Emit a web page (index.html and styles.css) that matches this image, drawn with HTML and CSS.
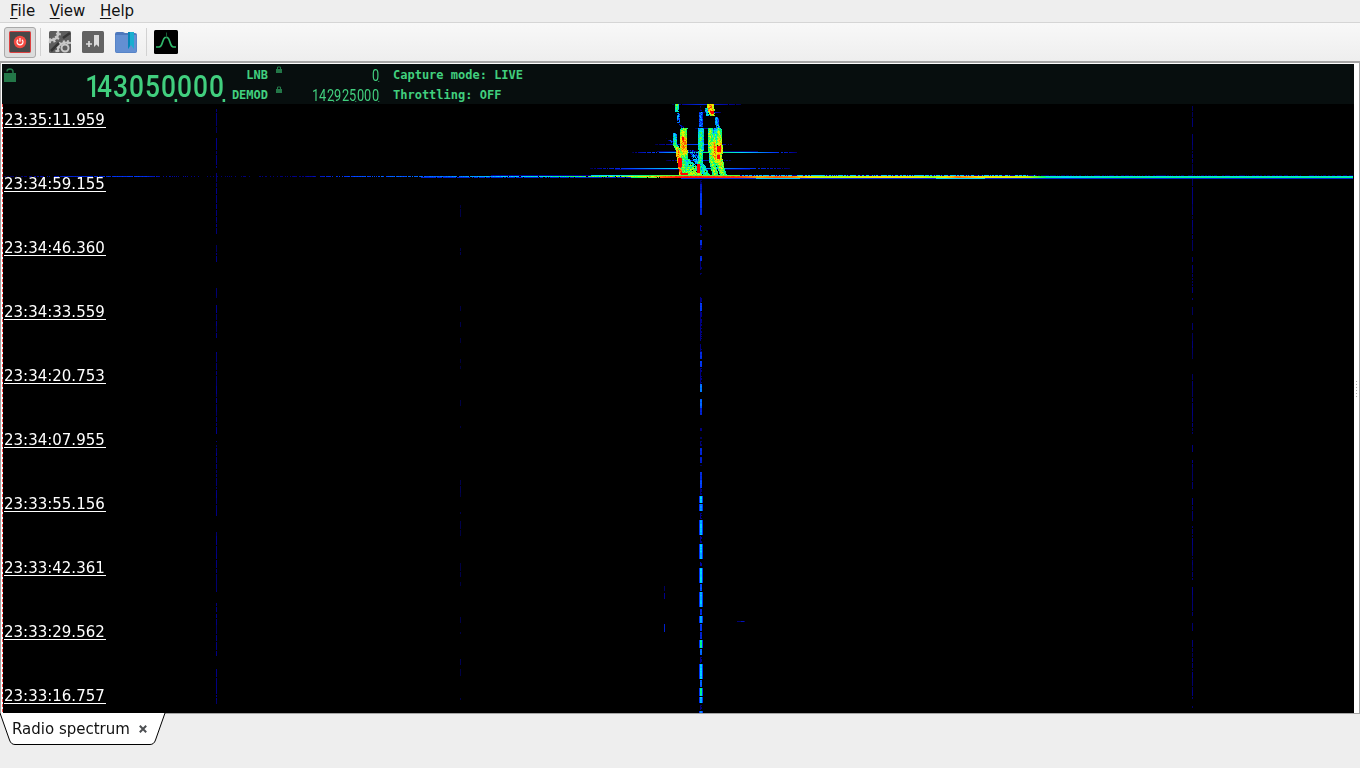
FILE: index.html
```html
<!DOCTYPE html>
<html lang="en">
<head>
  <meta charset="UTF-8">
  <title>Radio spectrum</title>
  <link rel="stylesheet" href="styles.css">
</head>
<body>
  <nav class="menubar">
    <span><u>F</u>ile</span>
    <span><u>V</u>iew</span>
    <span><u>H</u>elp</span>
  </nav>

  <div class="toolbar">
    <button class="tool active">
      <svg width="24" height="24" viewBox="0 0 24 24">
        <rect x="1.5" y="1.5" width="21" height="21" rx="1" fill="#484848" stroke="#dc4040"/>
        <circle cx="12" cy="12" r="6.2" fill="#f34b43"/>
        <path d="M10 9.7a3 3 0 1 0 4 0M12 8v3.7" fill="none" stroke="#fff" stroke-width="1.2"/>
      </svg>
    </button>
    <i class="divider"></i>
    <button class="tool">
      <svg width="24" height="24" viewBox="0 0 24 24">
        <rect x="1" y="1" width="22" height="22" rx="1.5" fill="#5d5d5d"/>
        <g fill="none" stroke="#c8c8c8">
          <path d="M1 10c6 1 10-3 9-9" stroke-width="2.500"/>
          <path d="M1 10.500c6 1 10-3 9.500-9.500" stroke-width="5" stroke-dasharray="1.8 2.200"/>
          <path d="M10 22c-1-7 4-11 13-9" stroke-width="2"/>
          <path d="M9.500 22c-1-7 4-11 13.500-9.500" stroke-width="4" stroke-dasharray="1.8 2.200"/>
          <circle cx="17" cy="18" r="3.500" stroke-width="2"/>
          <path d="M3 21L11 13M15 8L22 3" stroke="#353535" stroke-width="2.500"/>
        </g>
      </svg>
    </button>
    <button class="tool">
      <svg width="24" height="24" viewBox="0 0 24 24">
        <rect x="1" y="1" width="22" height="22" rx="1.5" fill="#636363"/>
        <path d="M13 5h5v12l-2.5-2.5L13 17z" fill="#ddd"/>
        <path d="M5 14h6M8 11v6" stroke="#ddd" stroke-width="1.7"/>
      </svg>
    </button>
    <button class="tool">
      <svg width="24" height="24" viewBox="0 0 24 24">
        <path d="M1 4q0-2 2-2h6l2 1h10q2 0 2 2v16q0 2-2 2H3q-2 0-2-2z" fill="#4d78bd"/>
        <path d="M1.5 5h21v16q0 1.5-2 1.5h-17q-2 0-2-1.5z" fill="#638fd2"/>
        <path d="M14 2h6v17l-3-4l-3 4z" fill="#19aed0"/>
        <path d="M14 2h2v14l-2 3z" fill="#0685b6"/>
      </svg>
    </button>
    <i class="divider"></i>
    <button class="tool">
      <svg width="24" height="24" viewBox="0 0 24 24">
        <rect width="24" height="24" rx="1.5" fill="#000"/>
        <path d="M2 17h3c4 0 3-8 6-9.500h2.500c3 1.500 2 9.500 6 9.500h2.500" fill="none" stroke="#30b96b" stroke-width="1.7"/>
        <path d="M12.500 2.500v5" stroke="#185b36"/>
      </svg>
    </button>
  </div>

  <main class="spectrum">
    <header class="lcd">
      <svg class="lock-main" width="12" height="14" viewBox="0 0 12 14">
        <path d="M0 5h12v9H0z" fill="#237748"/>
        <path d="M3 3.500Q3 1 6 1t3 3v2" fill="none" stroke="#237748" stroke-width="1.5"/>
      </svg>
      <div class="freq freq-big"><b class="one">1</b><b>4</b><b class="sep">3</b><b>0</b><b>5</b><b class="sep">0</b><b>0</b><b>0</b><b class="sep">0</b></div>
      <div class="names"><span>LNB</span><span>DEMOD</span></div>
      <div class="locks">
        <svg width="6" height="7" viewBox="0 0 6 7"><path d="M0 3h6v4H0z" fill="#237748"/><path d="M1.500 3V1h3v2" fill="none" stroke="#237748"/></svg>
        <svg width="6" height="7" viewBox="0 0 6 7"><path d="M0 3h6v4H0z" fill="#237748"/><path d="M1.500 3V1h3v2" fill="none" stroke="#237748"/></svg>
      </div>
      <div class="small-freqs">
        <div class="freq"><b class="sep">0</b></div>
        <div class="freq"><b>1</b><b>4</b><b class="sep">2</b><b>9</b><b>2</b><b class="sep">5</b><b>0</b><b>0</b><b class="sep">0</b></div>
      </div>
      <div class="status"><span>Capture mode: LIVE</span><span>Throttling: OFF</span></div>
    </header>

    <div class="waterfall">
      <canvas id="waterfall" width="1352" height="609"></canvas>
      <div class="times">
        <time>23:35:11.959</time>
        <time>23:34:59.155</time>
        <time>23:34:46.360</time>
        <time>23:34:33.559</time>
        <time>23:34:20.753</time>
        <time>23:34:07.955</time>
        <time>23:33:55.156</time>
        <time>23:33:42.361</time>
        <time>23:33:29.562</time>
        <time>23:33:16.757</time>
      </div>
    </div>
    <div class="grip"></div>
  </main>

  <footer class="tabs">
    <div class="tab">
      <svg class="tab-shape" width="166" height="32" viewBox="0 0 166 32">
        <path d="M0 0L9.500 27Q11 31.500 15 31.500H150Q154 31.500 155.500 27L165 0" fill="#fff" stroke="#000"/>
      </svg>
      <span>Radio spectrum</span>
      <svg class="close" width="8" height="8" viewBox="0 0 8 8"><path d="M.8.8l6.400 6.400M7.200.8L.8 7.200" stroke="#4d4f52" stroke-width="2"/></svg>
    </div>
  </footer>
  <script src="waterfall.js"></script>
</body>
</html>
```
FILE: styles.css
```css
* {
  box-sizing: border-box;
}
body {
  margin: 0;
  height: 768px;
  overflow: hidden;
  display: flex;
  flex-direction: column;
  background: #eee;
  color: #111;
  font-family: "DejaVu Sans", sans-serif;
  font-size: 15px;
}
.menubar {
  height: 23px;
  display: flex;
  gap: 14.600px;
  padding: 1px 0 0 10px;
  line-height: 20px;
  border-bottom: 1px solid #d5d5d5;
}
.menubar u {
  text-underline-offset: 2px;
}
.toolbar {
  height: 38px;
  display: flex;
  align-items: center;
  padding-left: 4px;
  background: linear-gradient(#f8f8f8, #eee);
}
.tool {
  width: 33px;
  height: 32px;
  padding: 0;
  display: flex;
  align-items: center;
  justify-content: center;
  border: 0;
  background: none;
}
.tool.active {
  width: 32px;
  height: 31px;
  border: 1px solid #a9a9a9;
  border-radius: 3px;
  background: #dcdcdc;
}
.divider {
  width: 1px;
  height: 28px;
  margin: 0 2px 0 4px;
  background: #d2d2d2;
}
.spectrum {
  height: 653px;
  display: grid;
  grid-template-columns: 1352px 1fr;
  grid-template-rows: 40px 609px;
  border: 1px solid #a5a5a5;
  border-top: 2px solid #a5a5a5;
  padding: 1px 0 0 1px;
  background: #fff;
}
.lcd {
  display: flex;
  background: #070e0e;
  color: #41cf7e;
}
.lock-main {
  margin: 4px 0 0 2px;
}
.freq {
  display: flex;
  font-family: Roboto, "Liberation Sans", sans-serif;
}
.freq b {
  width: 7.5px;
  font-size: 16px;
  font-weight: 400;
  line-height: 15px;
  transform: scaleX(.8);
  transform-origin: left;
}
.freq .sep {
  position: relative;
}
.freq .sep::after {
  content: "";
  position: absolute;
  right: -1px;
  bottom: 1px;
  width: 1px;
  height: 1px;
  background: #41cf7e;
}
.freq-big {
  width: 144px;
  margin: 8px 0 0 65px;
}
.freq-big b {
  width: 16px;
  font-size: 31px;
  font-weight: 500;
  line-height: 30px;
  transform: scaleX(.85);
}
.freq-big .one {
  text-indent: 5px;
}
.freq-big .sep::after {
  right: -3px;
  bottom: 2px;
  width: 3px;
  height: 3px;
}
.names,
.status {
  display: flex;
  flex-direction: column;
  padding-top: 1px;
  font: bold 12px/20px "DejaVu Sans Mono", monospace;
}
.names {
  width: 43px;
  text-align: right;
}
.locks {
  display: flex;
  flex-direction: column;
  gap: 13px;
  margin: 2px 0 0 8px;
}
.small-freqs {
  width: 97px;
  display: flex;
  flex-direction: column;
  align-items: flex-end;
  gap: 5px;
  padding-top: 4px;
}
.status {
  margin-left: 14px;
  white-space: pre;
}
.waterfall {
  grid-column: 1;
  display: grid;
  overflow: hidden;
}
.waterfall canvas,
.times {
  grid-area: 1 / 1;
}
.times {
  display: flex;
  flex-direction: column;
  align-items: flex-start;
  gap: 45px;
  padding: 5px 0 0 2px;
  color: #fff;
}
.times time {
  width: 102px;
  height: 19px;
  flex-shrink: 0;
  line-height: 22px;
  border-bottom: 1px solid #fff;
}
.grip {
  grid-area: 1 / 2 / 3 / 3;
  align-self: center;
  justify-self: start;
  width: 1px;
  height: 16px;
  margin-left: 2px;
  background: repeating-linear-gradient(#aaa 0 1px, transparent 1px 3px);
}
.tabs {
  flex: 1;
}
.tab {
  position: relative;
  z-index: 0;
  width: 166px;
  height: 32px;
  margin-top: -1px;
  display: flex;
  align-items: center;
  gap: 9px;
  padding-left: 12px;
}
.tab-shape {
  position: absolute;
  left: 0;
  top: 0;
  z-index: -1;
}
```
FILE: waterfall.js
```js
const canvas = document.getElementById("waterfall");
const ctx = canvas.getContext("2d");
ctx.translate(-2, -104);

let seed = 7;
function rnd() {
  seed = (seed * 16807) % 2147483647;
  return seed / 2147483647;
}

// signal level to colour
const scale = [
  [0, 0, 0, 0], [.15, 0, 0, 150], [.3, 0, 60, 255], [.48, 0, 220, 255],
  [.6, 0, 255, 100], [.72, 190, 255, 0], [.8, 255, 230, 0],
  [.9, 255, 110, 0], [1, 255, 0, 0]
];
function colour(v) {
  v = Math.max(0, Math.min(1, v));
  let i = 1;
  while (scale[i][0] < v) i++;
  const a = scale[i - 1], b = scale[i];
  const t = (v - a[0]) / (b[0] - a[0]);
  const c = n => Math.round(a[n] + (b[n] - a[n]) * t);
  return `rgb(${c(1)},${c(2)},${c(3)})`;
}
function cell(x, y, w, h, v) {
  ctx.fillStyle = colour(v);
  ctx.fillRect(Math.round(x), Math.round(y), w, h);
}
function level(stops, x) {
  for (let i = 1; i < stops.length; i++) {
    if (x <= stops[i][0]) {
      const a = stops[i - 1], b = stops[i];
      return a[1] + (b[1] - a[1]) * (x - a[0]) / (b[0] - a[0]);
    }
  }
  return stops[stops.length - 1][1];
}

ctx.fillStyle = "#000";
ctx.fillRect(2, 104, 1352, 609);

// weak constant carriers
function carrier(x, from, to, v, fill) {
  for (let y = from; y < to;) {
    const h = 2 + Math.floor(rnd() * 7);
    if (rnd() < fill) cell(x, y, 1, Math.min(h, to - y), v * (.75 + rnd() * .35));
    y += h + (rnd() < .6 ? 1 : 0);
  }
}
[[106, 168, .85], [173, 262, .85], [288, 338, .85], [352, 442, .9], [445, 528, .95],
 [532, 612, .85], [614, 656, .8], [669, 704, .95]].forEach(s => carrier(216, s[0], s[1], .13, s[2]));
[[106, 170, .8], [170, 262, .9], [265, 330, .85], [333, 434, .8], [445, 580, .95],
 [583, 638, .85], [640, 708, .85]].forEach(s => carrier(1192, s[0], s[1], .12, s[2]));
[[205, 225, .4], [248, 255, .8], [300, 380, .3], [400, 428, .3], [480, 497, .9],
 [512, 536, .7], [550, 704, .25]].forEach(s => carrier(460, s[0], s[1], .08, s[2]));

// centre carrier: from, to, level
[[180, 184, .1], [184, 193, .22], [193, 208, .3], [208, 215, .24], [225, 231, .16],
 [234, 236, .08], [240, 245, .28], [245, 250, .13], [256, 261, .26], [261, 270, .13],
 [273, 275, .1], [297, 303, .14], [303, 311, .3], [311, 341, .14], [344, 352, .13],
 [352, 359, .27], [361, 367, .3], [368, 384, .14], [384, 392, .38], [399, 408, .35],
 [408, 415, .24], [428, 431, .14], [437, 439, .1], [441, 446, .12], [448, 455, .25],
 [457, 463, .23], [465, 466, .1], [472, 480, .26], [480, 488, .32], [488, 495, .13],
 [496, 503, .48], [504, 511, .4], [513, 519, .14], [520, 535, .46], [536, 543, .15],
 [544, 552, .48], [552, 559, .46], [562, 566, .17], [568, 583, .5], [584, 591, .34],
 [592, 600, .45], [600, 607, .47], [609, 615, .26], [616, 623, .43], [624, 631, .3],
 [632, 639, .25], [640, 648, .58], [649, 655, .37], [657, 663, .15], [664, 679, .48],
 [680, 687, .35], [688, 696, .58], [697, 703, .46], [705, 710, .12], [711, 713, .4]
].forEach(([a, b, v]) => {
  for (let y = a; y < b; y++) {
    if (v > .2) cell(v > .38 ? 699 : 700, y, v > .38 ? 4 : 2, 1, v > .38 ? .28 : .2);
    cell(700, y, v > .2 || rnd() < .5 ? 2 : 1, 1, v * (.9 + rnd() * .12));
  }
});

cell(664, 586, 1, 5, .1);
cell(664, 593, 1, 6, .14);
cell(664, 624, 1, 8, .23);
cell(737, 621, 8, 1, .12);
cell(741, 621, 3, 1, .2);

// horizontal echoes: y, from, peak, to, level
[[104, 672, 700, 742, .25], [144, 655, 700, 732, .32], [152, 632, 712, 798, .62],
 [160, 666, 690, 732, .25], [168, 590, 680, 790, .5], [112, 702, 715, 721, .2],
 [128, 695, 708, 720, .2], [175, 655, 686, 725, .45]].forEach(([y, a, p, b, v]) => {
  for (let x = a; x < b; x++) {
    const t = x < p ? (x - a) / (p - a) : (b - x) / (b - p);
    const tail = t < .35 && rnd() < .3;
    if (!tail) cell(x, y, 1, 1, .07 + (v - .07) * Math.pow(t, .7));
  }
  if (v > .4) {
    for (let x = a + 25; x < b - 40; x++) cell(x, y + (y === 152 ? -1 : 1), 1, 1, .12);
  }
});

// noisy strand along a polyline of [x, y, width, level]
function strand(points, density) {
  for (let i = 1; i < points.length; i++) {
    const a = points[i - 1], b = points[i];
    for (let y = a[1]; y < b[1]; y++) {
      const t = (y - a[1]) / (b[1] - a[1]);
      const x = a[0] + (b[0] - a[0]) * t;
      const w = a[2] + (b[2] - a[2]) * t;
      const v = a[3] + (b[3] - a[3]) * t;
      for (let k = 0; k < w; k++) {
        const edge = Math.abs(k - (w - 1) / 2) / (w / 2);
        if (rnd() < density) cell(x - w / 2 + k, y, 1, 1, v - edge * .13 + (rnd() - .5) * .22);
      }
    }
  }
}
strand([[677, 104, 4, .66], [677, 112, 4, .55]], .98);
strand([[678, 113, 2, .45], [678, 123, 3, .45]], .85);
strand([[680, 124, 3, .2], [684, 129, 5, .25]], .6);
strand([[668, 138, 4, .25], [674, 143, 4, .35]], .6);
strand([[674, 133, 3, .5], [675, 144, 4, .62], [678, 150, 5, .85], [680, 163, 5, .95], [683, 177, 6, 1]], 1);
strand([[684, 128, 7, .7], [683, 140, 7, .9], [684, 150, 7, .86], [684, 160, 6, .62], [686, 177, 8, .78]], 1);
strand([[688, 159, 3, .55], [691, 166, 11, .65], [694, 177, 20, .78]], .92);
strand([[691, 150, 6, .25], [695, 157, 7, .42], [698, 164, 4, .5]], .7);
strand([[701, 105, 1, .1], [701, 111, 2, .15]], .8);
strand([[701, 112, 4, .4], [701, 127, 4, .37]], 1);
strand([[701, 128, 6, .56], [701, 150, 5, .63], [700, 160, 5, .6], [699, 177, 6, .75]], 1);
strand([[702, 164, 4, .5], [707, 177, 7, .7]], .95);
strand([[710, 104, 7, .87], [711, 111, 6, .92], [712, 116, 4, .75]], .98);
strand([[706, 108, 3, .5], [708, 116, 3, .55]], .9);
strand([[716, 117, 3, .42], [718, 128, 4, .52]], .95);
strand([[710, 128, 5, .67], [711, 145, 6, .74], [712, 160, 6, .66], [716, 177, 6, .72]], 1);
strand([[716, 128, 5, .45], [714, 145, 5, .86], [715, 156, 5, .88], [718, 166, 5, .65]], .97);
strand([[719, 128, 4, .65], [720, 145, 5, .88], [719, 158, 6, .84], [721, 168, 7, .73], [724, 177, 7, .68]], 1);
[[678, 158, 4, 9], [681, 173, 7, 4], [697, 164, 3, 9], [717, 146, 4, 6], [717, 155, 3, 4],
 [711, 111, 3, 3], [682, 137, 2, 3]].forEach(([x, y, w, h]) => cell(x, y, w, h, 1));

// broadband pulse
const pulse = [
  [2, .07], [60, .24], [138, .3], [160, .2], [215, .12], [300, .14], [350, .32], [440, .38],
  [520, .5], [580, .62], [620, .72], [650, .87], [680, 1], [738, .96], [758, .86],
  [775, .92], [790, .9], [820, .74], [845, .74], [880, .8], [920, .78], [932, .7],
  [958, .9], [983, .79], [1022, .77], [1045, .6], [1065, .5], [1110, .58], [1353, .58]
];
for (let x = 2; x < 1353; x++) {
  const v = level(pulse, x);
  if (x < 660) {
    const skip = x < 60 ? .5 : x < 160 ? .06 : x < 290 ? .65 : x < 430 ? .2 : .05;
    if (rnd() > skip) cell(x, 176, 1, 1, v * (.85 + rnd() * .2));
    if (x > 420 && rnd() < .9) cell(x, 177, 1, 1, x > 630 ? v * .75 : .24);
    if (x > 490) cell(x, 175, 1, 1, x > 590 ? v * .7 : .15);
    continue;
  }
  cell(x, 175, 1, 1, x < 740 ? .65 : x > 1035 ? (rnd() < .6 ? .1 : 0) : rnd() < .6 ? .46 : .16);
  cell(x, 176, 1, 1, x > 1045 ? .5 : v - .05 * rnd());
  cell(x, 177, 1, 1, v);
  if (x > 680) cell(x, 178, 1, 1, x > 755 && x < 800 || x > 935 && x < 985 ? .46 : .25);
}

// time marker at the left edge
ctx.fillStyle = "#fff";
ctx.fillRect(2, 104, 1, 609);
ctx.fillStyle = "#ff4a4a";
for (let y = 104; y < 713; y += 5) ctx.fillRect(2, y, 1, 3);
```
